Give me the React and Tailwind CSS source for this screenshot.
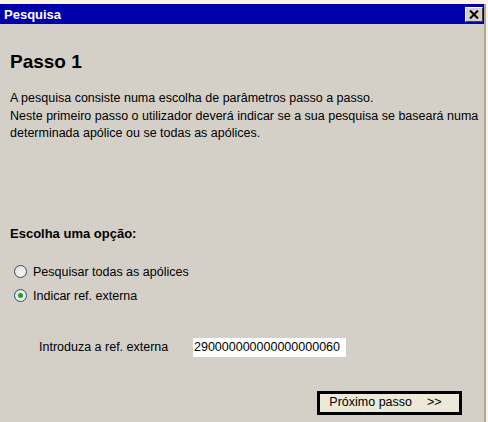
export default function App() {
  return (
    <div className="w-[488px] h-[422px] bg-[#fbf4e4] pt-[4px] overflow-hidden font-['Liberation_Sans',Arial,sans-serif] text-black">
      <div className="w-[486px] h-[418px] flex flex-col bg-[#d4d0c8] border-r-2 border-[#aca899]">
        {/* Title bar */}
        <div className="shrink-0 h-[20px] bg-[#0000aa] flex items-center justify-between pl-[4px] pr-[1px]">
          <span className="text-white font-bold text-[13px] leading-none">Pesquisa</span>
          <button className="w-[18px] h-[15px] bg-[#d4d0c8] border border-t-white border-l-white border-r-[#404040] border-b-[#404040] flex items-center justify-center">
            <svg width="10" height="9" viewBox="0 0 10 9">
              <path d="M1 0.5 L9 8.5 M9 0.5 L1 8.5" stroke="#000" strokeWidth="2" />
            </svg>
          </button>
        </div>

        <div className="flex-1 flex flex-col px-[10px]">
          <h1 className="mt-[27px] text-[19px] font-bold leading-[22px]">Passo 1</h1>

          <p className="mt-[17px] text-[12.5px] leading-[17.5px] whitespace-nowrap">
            A pesquisa consiste numa escolha de parâmetros passo a passo.
            <br />
            Neste primeiro passo o utilizador deverá indicar se a sua pesquisa se baseará numa
            <br />
            determinada apólice ou se todas as apólices.
          </p>

          <h2 className="mt-[83px] text-[13px] font-bold leading-[16px]">Escolha uma opção:</h2>

          <div className="mt-[23px] flex flex-col gap-[10px] pl-[4px] text-[12.5px] leading-[14px]">
            <label className="flex items-center gap-[6px]">
              <span className="w-[13px] h-[13px] rounded-full border border-[#1c5180] bg-gradient-to-br from-[#dcdcd6] to-white" />
              <span>Pesquisar todas as apólices</span>
            </label>
            <label className="flex items-center gap-[6px]">
              <span className="w-[13px] h-[13px] rounded-full border border-[#1c5180] bg-gradient-to-br from-[#dcdcd6] to-white flex items-center justify-center">
                <span className="w-[5px] h-[5px] rounded-full bg-[#21a121]" />
              </span>
              <span>Indicar ref. externa</span>
            </label>
          </div>

          <div className="mt-[35px] flex items-center pl-[29px]">
            <span className="w-[154px] text-[12.5px]">Introduza a ref. externa</span>
            <div className="w-[153px] h-[19px] bg-white flex items-center pl-[1px] text-[12.5px]">
              290000000000000000060
            </div>
          </div>

          <div className="mt-[34px] flex justify-end pr-[12px]">
            <button className="w-[145px] h-[24px] bg-[#ece9d8] border-[3px] border-black text-[12.5px] flex items-center justify-center gap-[15px] pr-[8px]">
              <span>Próximo passo</span>
              <span>&gt;&gt;</span>
            </button>
          </div>
        </div>
      </div>
    </div>
  );
}
